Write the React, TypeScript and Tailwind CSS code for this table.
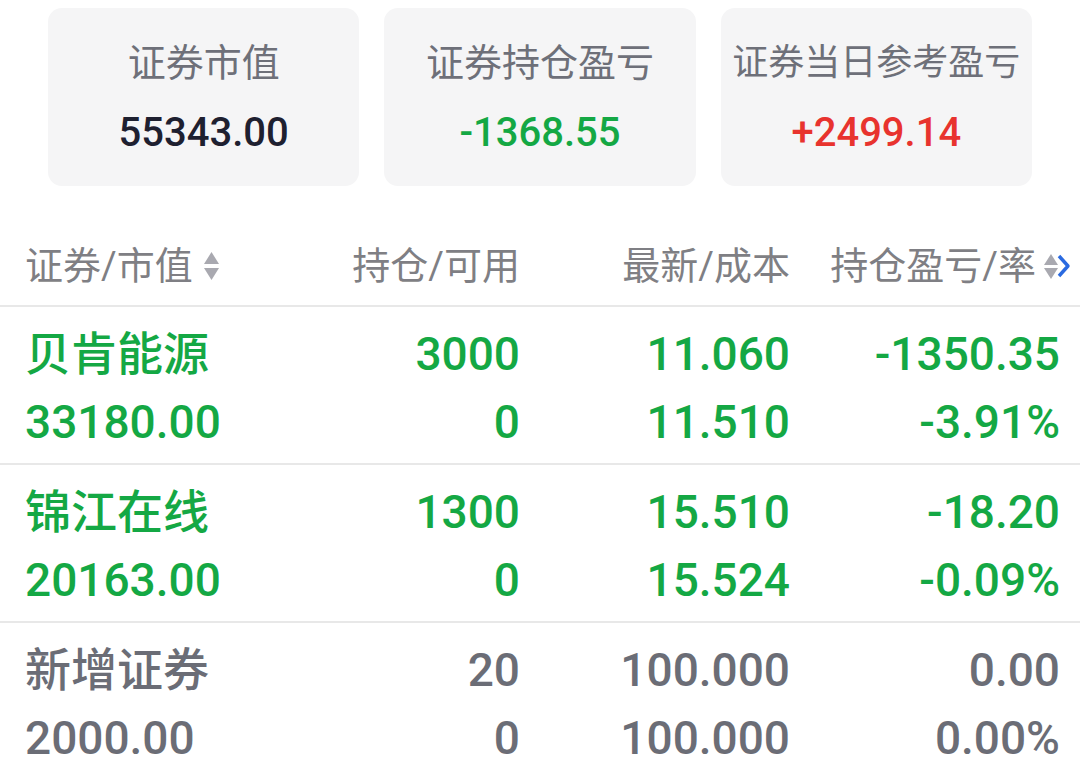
const GREEN = 'text-[#14a844]'
const GREY = 'text-[#6b6d76]'

type Position = {
  name: string
  value: string
  hold: string
  avail: string
  last: string
  cost: string
  pl: string
  rate: string
  color: string
}

const positions: Position[] = [
  { name: '贝肯能源', value: '33180.00', hold: '3000', avail: '0', last: '11.060', cost: '11.510', pl: '-1350.35', rate: '-3.91%', color: GREEN },
  { name: '锦江在线', value: '20163.00', hold: '1300', avail: '0', last: '15.510', cost: '15.524', pl: '-18.20', rate: '-0.09%', color: GREEN },
  { name: '新增证券', value: '2000.00', hold: '20', avail: '0', last: '100.000', cost: '100.000', pl: '0.00', rate: '0.00%', color: GREY },
]

const SortIcon = () => (
  <svg width="17" height="32" viewBox="0 0 17 32" className="shrink-0">
    <polygon points="8.5,2 16,14 1,14" fill="#a9a9b0" />
    <polygon points="1,18 16,18 8.5,30" fill="#a9a9b0" />
  </svg>
)

const SortNextIcon = () => (
  <svg width="30" height="30" viewBox="0 0 30 30" className="shrink-0">
    <polygon points="9,3 16,14 2,14" fill="#a9a9b0" />
    <polygon points="2,17 16,17 9,28" fill="#a9a9b0" />
    <polyline points="17,5 26,15 17,25" fill="none" stroke="#2a6ae0" strokeWidth="3.4" strokeLinejoin="round" />
  </svg>
)

const SummaryCard = ({ title, value, valueClass, titleClass }: { title: string; value: string; valueClass: string; titleClass: string }) => (
  <div className="flex h-[178px] flex-col items-center rounded-[14px] bg-[#f5f5f6] pt-[30px]">
    <p className={`whitespace-nowrap leading-[50px] text-[#6e7079] ${titleClass}`}>{title}</p>
    <p className={`mt-[20px] text-[40px] font-medium leading-[50px] ${valueClass}`}>{value}</p>
  </div>
)

export default function App() {
  return (
    <div className="min-h-[768px] w-[1080px] overflow-hidden bg-white font-[Roboto,'Noto_Sans_CJK_SC',sans-serif]">
      <section className="grid grid-cols-3 gap-[25px] px-12 pt-2">
        <SummaryCard title="证券市值" value="55343.00" titleClass="text-[38px]" valueClass="text-[#1e2030]" />
        <SummaryCard title="证券持仓盈亏" value="-1368.55" titleClass="text-[38px]" valueClass="text-[#14a844]" />
        <SummaryCard title="证券当日参考盈亏" value="+2499.14" titleClass="text-[36px]" valueClass="text-[#e8332e]" />
      </section>

      <div className="mt-[43px] grid h-[78px] grid-cols-[280px_215px_270px_270px] items-center border-b-2 border-[#e8e8e8] pb-[2px] pl-[25px] text-[38px] text-[#7f7f84]">
        <div className="flex items-center gap-[10px]">
          <span>证券/市值</span>
          <SortIcon />
        </div>
        <div className="text-right">持仓/可用</div>
        <div className="text-right">最新/成本</div>
        <div className="-mr-[12px] flex items-center justify-end gap-[6px]">
          <span>持仓盈亏/率</span>
          <SortNextIcon />
        </div>
      </div>

      {positions.map((p, i) => (
        <div
          key={p.name}
          className={`grid h-[158px] grid-cols-[280px_215px_270px_270px] pl-[25px] pt-[13px] text-[46px] font-medium leading-[68px] ${p.color} ${i < positions.length - 1 ? 'border-b-2 border-[#e8e8e8]' : ''}`}
        >
          <div>
            <p>{p.name}</p>
            <p>{p.value}</p>
          </div>
          <div className="text-right">
            <p>{p.hold}</p>
            <p>{p.avail}</p>
          </div>
          <div className="text-right">
            <p>{p.last}</p>
            <p>{p.cost}</p>
          </div>
          <div className="text-right">
            <p>{p.pl}</p>
            <p>{p.rate}</p>
          </div>
        </div>
      ))}
    </div>
  )
}
